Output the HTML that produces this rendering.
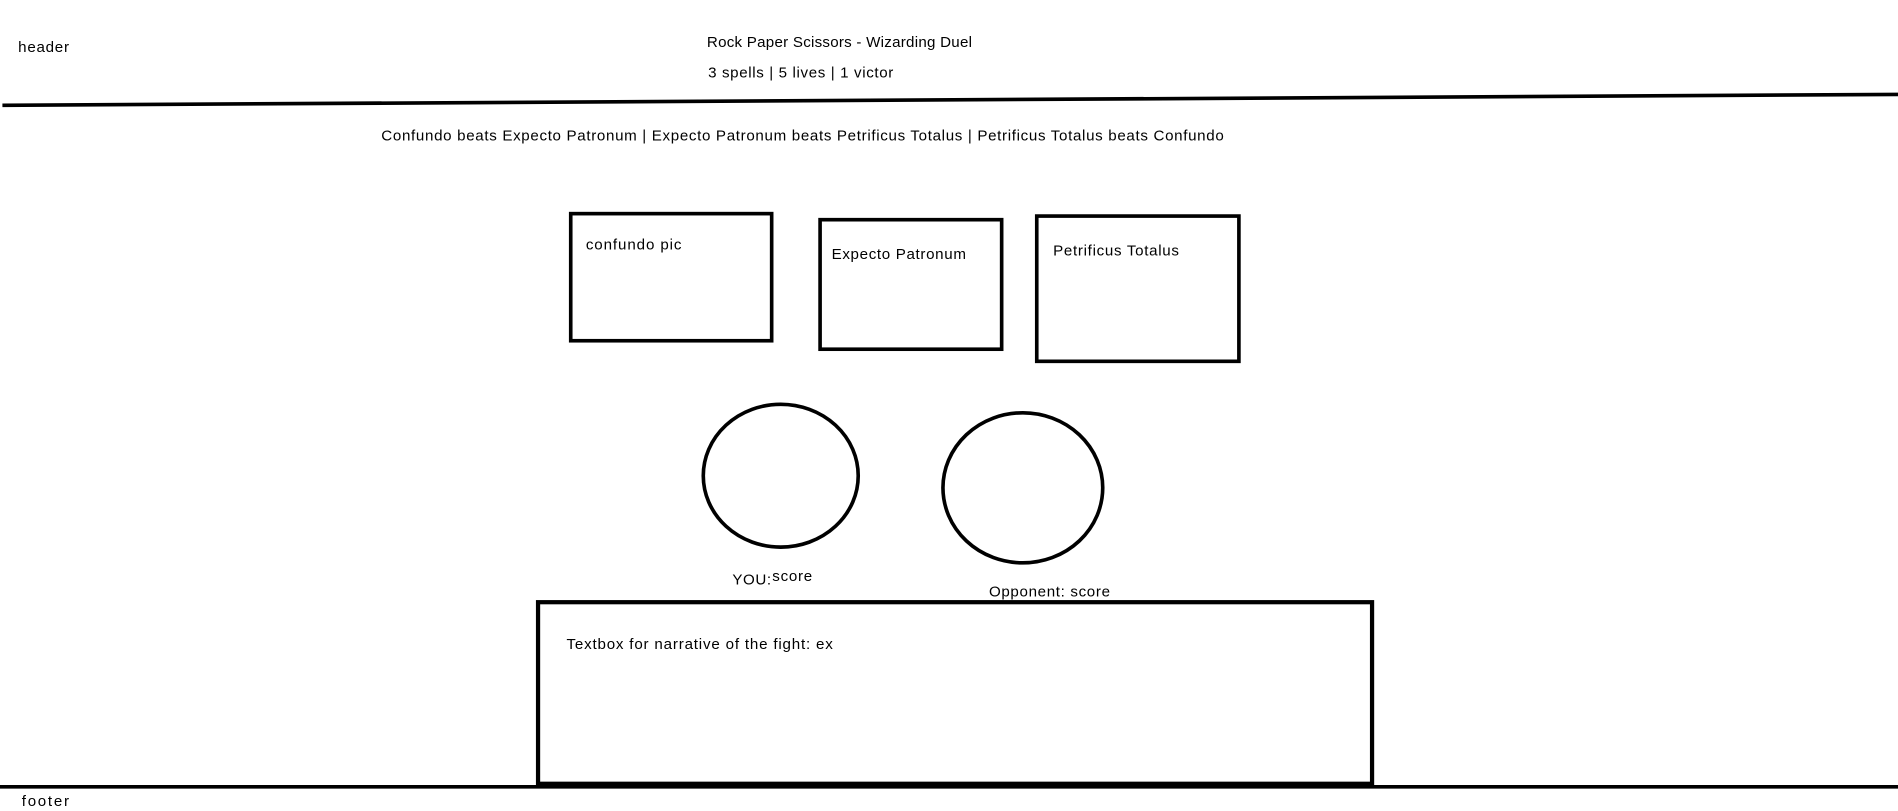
<!DOCTYPE html>
<html><head><meta charset="utf-8"><style>
html,body{margin:0;padding:0;background:#fff;width:1898px;height:811px;overflow:hidden}
svg{display:block}
text{font-family:"Liberation Sans",sans-serif;font-size:12.5px;fill:#000}
</style></head><body>
<svg width="1898" height="811" viewBox="0 0 1568 670" preserveAspectRatio="none" xmlns="http://www.w3.org/2000/svg">
<g fill="none" stroke="#000">
<line x1="2" y1="87" x2="1568" y2="78" stroke-width="3"/>
<rect x="471.5" y="176.5" width="166" height="105" stroke-width="3"/>
<rect x="677.5" y="181.5" width="150" height="107" stroke-width="3"/>
<rect x="856.5" y="178.5" width="167" height="120" stroke-width="3"/>
<ellipse cx="645" cy="393" rx="64" ry="59" stroke-width="3"/>
<ellipse cx="845" cy="403" rx="66" ry="62" stroke-width="3"/>
<rect x="444.5" y="497.5" width="689" height="150" stroke-width="3.5"/>
<line x1="0" y1="650" x2="1568" y2="650" stroke-width="3"/>
</g>
<text x="15" y="43" textLength="42">header</text>
<text x="584" y="39" textLength="219">Rock Paper Scissors - Wizarding Duel</text>
<text x="585" y="64" textLength="153">3 spells | 5 lives | 1 victor</text>
<text x="315" y="116" textLength="696">Confundo beats Expecto Patronum | Expecto Patronum beats Petrificus Totalus | Petrificus Totalus beats Confundo</text>
<text x="484" y="206" textLength="79">confundo pic</text>
<text x="687" y="214" textLength="111">Expecto Patronum</text>
<text x="870" y="211" textLength="104">Petrificus Totalus</text>
<text x="605" y="483" textLength="32">YOU:</text>
<text x="638" y="480" textLength="33">score</text>
<text x="817" y="493" textLength="100">Opponent: score</text>
<text x="468" y="536" textLength="220">Textbox for narrative of the fight: ex</text>
<text x="18" y="666" textLength="39">footer</text>
</svg>
</body></html>
